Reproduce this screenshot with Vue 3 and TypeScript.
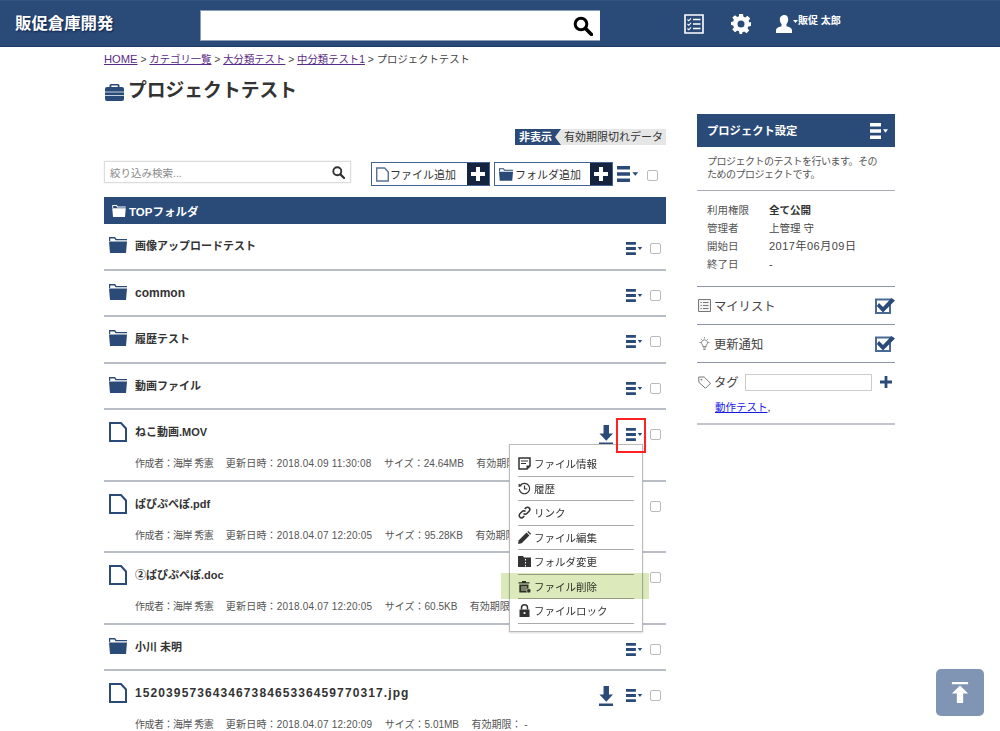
<script setup lang="ts">
interface Row {
  name: string
  kind: 'folder' | 'file'
  nameClass?: string
  meta?: string[]
  open?: boolean
}
const rows: Row[] = [
  { name: '画像アップロードテスト', kind: 'folder' },
  { name: 'common', kind: 'folder', nameClass: 'latin' },
  { name: '履歴テスト', kind: 'folder' },
  { name: '動画ファイル', kind: 'folder' },
  { name: 'ねこ動画.MOV', kind: 'file', open: true, meta: ['作成者：海岸 秀憲', '更新日時：2018.04.09 11:30:08', 'サイズ：24.64MB', '有効期限： -'] },
  { name: 'ぱぴぷぺぽ.pdf', kind: 'file', meta: ['作成者：海岸 秀憲', '更新日時：2018.04.07 12:20:05', 'サイズ：95.28KB', '有効期限： -'] },
  { name: '②ぱぴぷぺぽ.doc', kind: 'file', meta: ['作成者：海岸 秀憲', '更新日時：2018.04.07 12:20:05', 'サイズ：60.5KB', '有効期限： -'] },
  { name: '小川 未明', kind: 'folder' },
  { name: '15203957364346738465336459770317.jpg', kind: 'file', nameClass: 'long', meta: ['作成者：海岸 秀憲', '更新日時：2018.04.07 12:20:09', 'サイズ：5.01MB', '有効期限： -'] },
]
const menu = ['ファイル情報', '履歴', 'リンク', 'ファイル編集', 'フォルダ変更', 'ファイル削除', 'ファイルロック']
const info = [
  { k: '利用権限', v: '全て公開', cls: 'strong' },
  { k: '管理者', v: '上管理 守' },
  { k: '開始日', v: '2017年06月09日', cls: 'wide' },
  { k: '終了日', v: '-' },
]
</script>

<template>
  <div class="page">
    <svg class="defs" aria-hidden="true">
      <symbol id="burger" viewBox="0 0 20 14" preserveAspectRatio="none">
        <path d="M0 0h11v3H0zM0 5.500h11v3H0zM0 11h11v3H0z" />
        <path d="M13 5.500h5l-2.500 3z" />
      </symbol>
      <symbol id="folder" viewBox="0 0 18 16">
        <path d="M0 0h6l1.500 2H18v1.200H6.500L5.500 1.400H1.200V4H0z" />
        <path d="M0 4.400h18L17 16H1z" />
      </symbol>
      <symbol id="file" viewBox="0 0 18 20">
        <path d="M1 1h11l5 5.500V19H1z" fill="#fff" stroke="currentColor" stroke-width="2" />
      </symbol>
      <symbol id="check" viewBox="0 0 20 17">
        <path d="M1 2.500h14v13.500H1z" fill="none" stroke="currentColor" stroke-width="2" />
        <path d="M4 6l4 4 8.500-9L20 3.500 8 15.500 1.800 9z" />
      </symbol>
      <symbol id="download" viewBox="0 0 16 21" preserveAspectRatio="none">
        <path d="M5 0h6v9h4.500L8 16.500.5 9H5z" />
        <path d="M0 18.500h16V21H0z" />
      </symbol>
    </svg>

    <header class="top">
      <div class="logo">販促倉庫開発</div>
      <div class="search">
        <svg class="search-icon" viewBox="0 0 20 20" width="20" height="20">
          <circle cx="8" cy="8" r="5.800" fill="none" stroke="#000" stroke-width="3" />
          <path d="M12.500 12.500L18.500 18.500" stroke="#000" stroke-width="3.600" stroke-linecap="round" />
        </svg>
      </div>
      <svg class="h-list" viewBox="0 0 20 20" width="20" height="20">
        <path d="M1 1h18v18H1z" fill="none" stroke="#fff" stroke-width="1.600" />
        <path d="M9 5.500h7.500M9 10h7.500M9 14.500h7.500" stroke="#fff" stroke-width="1.500" />
        <path d="M3.500 5.500l1.300 1.300L7 4.300M3.500 10l1.300 1.300L7 8.800M3.500 14.500l1.300 1.300L7 13.300" fill="none" stroke="#fff" stroke-width="1.100" />
      </svg>
      <svg class="h-gear" viewBox="0 0 20 20" width="20" height="20">
        <path fill="#fff" fill-rule="evenodd" d="M8 0h4l.5 2.700 1.700.7 2.300-1.600 2.700 2.700-1.600 2.300.7 1.700L20 8v4l-2.700.5-.7 1.700 1.600 2.300-2.700 2.700-2.300-1.600-1.700.7L11 20H8.500L8 17.300l-1.700-.7L4 18.200 1.300 15.500l1.600-2.300-.7-1.700L0 11V8l2.200-.5.700-1.700L1.300 3.500 4 1.300l2.300 1.600L8 2.200zM10 6.500a3.500 3.500 0 100 7 3.500 3.500 0 000-7z" />
      </svg>
      <svg class="h-user" viewBox="0 0 23 18" width="23" height="18">
        <path fill="#fff" d="M8.500 0c2.400 0 3.700 1.800 3.700 4.200 0 2.100-.8 3.800-1.700 4.800v2.200c2 .6 5.500 1.500 5.500 4V18H0v-2.800c0-2.500 3.500-3.400 5.500-4V9C4.600 8 3.800 6.300 3.800 4.200 3.800 1.800 6.100 0 8.500 0z" />
        <path fill="#fff" d="M17 5h5l-2.500 3z" />
      </svg>
      <div class="user">販促 太郎</div>
    </header>

    <div class="content">
      <main class="left">
        <nav class="crumbs">
          <a class="home">HOME</a> &gt; <a>カテゴリ一覧</a> &gt; <a>大分類テスト</a> &gt; <a>中分類テスト1</a> &gt; プロジェクトテスト
        </nav>
        <h1 class="title">
          <svg viewBox="0 0 19 17" width="19" height="17">
            <path fill="#2a4a78" d="M6 0h7a1.500 1.500 0 011.500 1.500V3H17a2 2 0 012 2v10a2 2 0 01-2 2H2a2 2 0 01-2-2V5a2 2 0 012-2h2.500V1.500A1.500 1.500 0 016 0zm.3 1.500V3h6.400V1.500z" />
            <path fill="#c4d0e0" d="M0 7.500h19v1H0zM0 11h19v1H0z" />
          </svg>
          プロジェクトテスト
        </h1>

        <div class="toggle-line">
          <div class="toggle"><span class="t-on">非表示</span><span class="t-off">有効期限切れデータ</span></div>
        </div>

        <div class="tools">
          <div class="filter">
            <span>絞り込み検索...</span>
            <svg viewBox="0 0 14 14" width="13" height="13">
              <circle cx="5.700" cy="5.700" r="4.300" fill="none" stroke="#333" stroke-width="2" />
              <path d="M9 9l4 4" stroke="#333" stroke-width="2.400" stroke-linecap="round" />
            </svg>
          </div>
          <div class="add">
            <svg class="add-ic file-ic" width="13" height="17"><use href="#file" /></svg>
            <span>ファイル追加</span>
            <b class="plus"><i class="cross"></i></b>
          </div>
          <div class="add second">
            <svg class="add-ic folder-ic" width="14" height="13"><use href="#folder" /></svg>
            <span>フォルダ追加</span>
            <b class="plus"><i class="cross"></i></b>
          </div>
          <svg class="burger big"><use href="#burger" /></svg>
          <span class="cb tool-cb"></span>
        </div>

        <div class="top-folder">
          <svg width="14" height="12" class="white-ic"><use href="#folder" /></svg>
          TOPフォルダ
        </div>

        <section
          v-for="r in rows"
          :key="r.name"
          class="row"
          :class="r.kind"
        >
          <div class="row-top">
            <svg v-if="r.kind === 'folder'" class="ic-folder"><use href="#folder" /></svg>
            <svg v-else class="ic-file"><use href="#file" /></svg>
            <div class="name" :class="r.nameClass">{{ r.name }}</div>
            <div class="actions">
              <svg v-if="r.kind === 'file'" class="dl"><use href="#download" /></svg>
              <svg class="burger"><use href="#burger" /></svg>
              <span class="cb"></span>
            </div>
          </div>
          <div v-if="r.meta" class="meta">
            <span v-for="m in r.meta" :key="m">{{ m }}</span>
          </div>

          <template v-if="r.open">
            <div class="red"></div>
            <ul class="menu">
              <li v-for="(m, i) in menu" :key="m">
                <svg class="mi" viewBox="0 0 13 13" width="13" height="13">
                  <g v-if="i === 0">
                    <path d="M1 1h11v8l-3 3H1z" fill="none" stroke="#333" stroke-width="1.500" />
                    <path d="M3 4h7M3 6.500h5" stroke="#333" stroke-width="1.100" />
                    <path d="M8.500 12V8.500H12z" fill="#333" />
                  </g>
                  <g v-else-if="i === 1">
                    <path d="M2.300 3.400A5.200 5.200 0 111.300 7" fill="none" stroke="#333" stroke-width="1.200" />
                    <path d="M.6 1.500l3.500 2.600L.6 5z" fill="#333" />
                    <path d="M6.500 3.500v3.500h2.800" fill="none" stroke="#333" stroke-width="1.200" />
                  </g>
                  <g v-else-if="i === 2" fill="none" stroke="#333" stroke-width="1.500">
                    <path d="M5.500 7.500a2.300 2.300 0 003.300 0l2.300-2.300a2.300 2.300 0 00-3.300-3.300L6.700 3" />
                    <path d="M7.500 5.500a2.300 2.300 0 00-3.300 0L1.900 7.800a2.300 2.300 0 003.300 3.300L6.300 10" />
                  </g>
                  <g v-else-if="i === 3" fill="#333">
                    <path d="M0 13l.8-3.700L8.500 1.600l2.900 2.900-7.700 7.700z" />
                    <path d="M9.300.8l1-.8 2.800 2.800-1 1z" />
                  </g>
                  <g v-else-if="i === 4">
                    <path d="M0 1h5l1 1.500h7V12H0z" fill="#333" />
                    <path d="M7.500 4v1.500M7.500 7v1.500M7.500 10v1.500" stroke="#fff" stroke-width="1" />
                  </g>
                  <g v-else-if="i === 5">
                    <path d="M4 1h4v1.200h3.500v1.300H.500V2.200H4zM1.300 4.500h9.200v8H1.300z" fill="#333" />
                    <path d="M4 6v5M6 6v5M8 6v5" stroke="#fff" stroke-width=".9" />
                    <circle cx="10.800" cy="10.800" r="2.200" fill="#333" stroke="#fff" stroke-width=".7" />
                  </g>
                  <g v-else>
                    <path d="M1.500 5.500h10V13h-10z" fill="#333" />
                    <path d="M3.500 5.500V3.800a3 3 0 016 0v1.700" fill="none" stroke="#333" stroke-width="1.500" />
                    <circle cx="6.500" cy="9" r="1.100" fill="#fff" />
                  </g>
                </svg>
                {{ m }}
              </li>
              <li class="hl"></li>
            </ul>
          </template>
        </section>
      </main>

      <aside class="side">
        <div class="side-head">
          <span>プロジェクト設定</span>
          <svg class="burger side-burger"><use href="#burger" /></svg>
        </div>
        <p class="desc">プロジェクトのテストを行います。そのためのプロジェクトです。</p>
        <dl class="info">
          <div v-for="i in info" :key="i.k" class="info-row">
            <dt>{{ i.k }}</dt>
            <dd :class="i.cls">{{ i.v }}</dd>
          </div>
        </dl>
        <div class="opt">
          <svg class="opt-ic" viewBox="0 0 13 13" width="13" height="13">
            <path d="M.5.500h12v12H.5z" fill="#f4f4f4" stroke="#777" />
            <path d="M5 3.500h5.500M5 6.500h5.500M5 9.500h5.500M2.500 3.500h1.300M2.500 6.500h1.300M2.500 9.500h1.300" stroke="#777" />
          </svg>
          <span class="opt-label">マイリスト</span>
          <svg class="opt-check"><use href="#check" /></svg>
        </div>
        <div class="opt">
          <svg class="opt-ic" viewBox="0 0 13 13" width="13" height="13">
            <path d="M6.500 2.800a3 3 0 00-1.800 5.400v1.300h3.600V8.200a3 3 0 00-1.800-5.400zM5 11h3M5.500 12.500h2" fill="none" stroke="#888" />
            <path d="M6.500 0v1.500M1.500 5.500H3M10 5.500h1.500M2.800 1.800l1 1M10.200 1.800l-1 1" stroke="#999" />
          </svg>
          <span class="opt-label">更新通知</span>
          <svg class="opt-check"><use href="#check" /></svg>
        </div>
        <div class="tag">
          <div class="tag-line">
            <svg class="opt-ic" viewBox="0 0 13 13" width="13" height="13">
              <path d="M.7 1h5.500l6.300 6.300-5 5L.9 6.400z" fill="none" stroke="#777" />
              <circle cx="3.500" cy="3.600" r=".9" fill="#777" />
            </svg>
            <span class="opt-label tag-label">タグ</span>
            <span class="tag-input"></span>
            <svg class="tag-plus" viewBox="0 0 13 13" width="12" height="12"><path d="M5 0h3v5h5v3H8v5H5V8H0V5h5z" fill="#2a4a78" /></svg>
          </div>
          <div class="tag-link"><a>動作テスト</a>,</div>
        </div>
      </aside>
    </div>

    <div class="totop">
      <svg viewBox="0 0 20 24" width="18" height="21" preserveAspectRatio="none">
        <path fill="#fff" d="M1 0h18v2.500H1zM10 4l9 9h-5.500v11h-7V13H1z" />
      </svg>
    </div>
  </div>
</template>

<style>
html, body { margin: 0; height: 731px; overflow: hidden; background: #fff; }
</style>

<style scoped>
.page {
  position: relative;
  height: 731px;
  overflow: hidden;
  color: #333;
  font-family: "Liberation Sans", "Noto Sans CJK JP", sans-serif;
  font-size: 11px;
}
.defs { position: absolute; width: 0; height: 0; }

.top {
  box-sizing: border-box;
  height: 47px;
  background: #2a4a78;
  border-top: 1px solid #34527f;
  border-bottom: 1px solid #1c3a68;
  display: flex;
  align-items: flex-start;
  color: #fff;
}
.logo {
  width: 185px;
  padding-left: 15px;
  font-size: 16.400px;
  line-height: 44px;
  font-weight: 700;
  text-shadow: 1px 1px 2px #0c2347;
  white-space: nowrap;
}
.search {
  margin-top: 9px;
  width: 400px;
  height: 31px;
  box-sizing: border-box;
  background: #fff;
  border: 1px solid #8a9cb8;
  border-width: 1px 0 1px 1px;
  display: flex;
  justify-content: flex-end;
  align-items: center;
  padding-right: 7px;
}
.h-list { margin: 13px 0 0 84px; }
.h-gear { margin: 13px 0 0 27px; }
.h-user { margin: 14px 0 0 25px; }
.user { margin: 13px 0 0 -1px; font-size: 10px; line-height: 14px; font-weight: 700; }

.content { display: flex; margin-left: 104px; width: 791px; gap: 31px; }
.left { width: 562px; flex: none; }

.crumbs { margin-top: 5px; line-height: 14px; font-size: 10.350px; color: #444; white-space: nowrap; }
.crumbs a { color: #5b2a86; text-decoration: underline; }
.crumbs a.home { font-size: 11.200px; }
.title {
  margin: 11px 0 0;
  display: flex;
  align-items: center;
  gap: 4px;
  font-size: 18.800px;
  line-height: 26px;
  font-weight: 700;
  color: #333;
}
.title svg { margin-left: 1px; margin-top: 3px; }

.toggle-line { margin-top: 25px; display: flex; justify-content: flex-end; }
.toggle { display: flex; height: 16px; line-height: 16px; font-size: 11px; }
.t-on { background: #2a4a78; color: #fff; font-weight: 700; padding: 0 8px 0 4px; width: 34px; }
.t-off { position: relative; background: #e6e6e6; padding: 0 3px 0 3px; color: #333; }
.t-off::before {
  content: "";
  position: absolute;
  left: -6px;
  top: 0;
  border-right: 6px solid #e6e6e6;
  border-top: 8px solid transparent;
  border-bottom: 8px solid transparent;
}

.tools { margin-top: 16px; display: flex; align-items: flex-start; height: 36px; }
.filter {
  box-sizing: border-box;
  width: 247px;
  height: 22px;
  border: 1px solid #ddd;
  box-shadow: 0 0 1px #ccc;
  display: flex;
  align-items: center;
  justify-content: space-between;
  padding: 0 5px;
  font-size: 10.500px;
  color: #888;
}
.add {
  box-sizing: border-box;
  margin: 1px 0 0 20px;
  width: 119px;
  height: 24px;
  border: 1px solid #44628f;
  display: flex;
  align-items: center;
  font-size: 11px;
  color: #333;
}
.add.second { margin-left: 4px; }
.add-ic { margin-left: 4px; margin-right: 1px; color: #5a7397; }
.folder-ic { fill: #2a4a78; color: #2a4a78; margin-right: 2px; }
.add span { flex: 1; white-space: nowrap; }
.plus {
  width: 22px;
  height: 22px;
  background: #14243f;
  display: flex;
  align-items: center;
  justify-content: center;
}
.cross {
  display: block;
  width: 14px;
  height: 14px;
  background:
    linear-gradient(#fff, #fff) center / 14px 4px no-repeat,
    linear-gradient(#fff, #fff) center / 4px 14px no-repeat;
}
.burger { width: 18px; height: 13px; fill: #2a4a78; flex: none; }
.burger.big { width: 23.600px; height: 16px; margin: 5px 0 0 4px; }
.cb {
  display: block;
  box-sizing: border-box;
  width: 11px;
  height: 11px;
  border: 1px solid #bbb;
  border-radius: 2px;
  background: #fff;
  flex: none;
}
.tool-cb { margin: 9px 0 0 6.400px; }

.top-folder {
  box-sizing: border-box;
  height: 27px;
  background: #2a4a78;
  color: #fff;
  font-weight: 700;
  font-size: 11.500px;
  display: flex;
  align-items: center;
  gap: 3px;
  padding-left: 8px;
}
.white-ic { fill: #fff; color: #fff; }

.row {
  position: relative;
  box-sizing: border-box;
  padding-top: 12px;
  border-bottom: 2px solid #b9bec6;
}
.row.folder { height: 46.500px; }
.row.file { height: 71.500px; }
.row-top { display: flex; align-items: flex-start; height: 33px; }
.ic-folder { width: 18px; height: 16px; margin: 1px 8px 0 5px; fill: #2a4a78; color: #2a4a78; flex: none; }
.ic-file { width: 18px; height: 20px; margin: 0 8px 0 5px; color: #2a4a78; flex: none; }
.name { flex: 1; margin-top: 1px; font-size: 11px; line-height: 18px; font-weight: 700; color: #333; white-space: nowrap; }
.name.latin { font-size: 12px; }
.name.long { font-size: 12px; letter-spacing: 1.100px; }
.actions { display: flex; align-items: flex-start; margin-top: 3px; height: 20px; }
.actions .burger { margin-top: 3px; margin-left: 13px; }
.actions .cb { margin: 4px 5px 0 6px; }
.dl { width: 14.500px; height: 20px; fill: #2a4a78; margin-top: 0; }
.meta { display: flex; gap: 12.500px; padding-left: 31px; font-size: 10px; line-height: 18px; color: #555; white-space: nowrap; }
.meta span:first-child { letter-spacing: -.5px; }
.meta span:nth-child(2) { letter-spacing: .2px; }

.red {
  position: absolute;
  left: 512px;
  top: 8px;
  width: 30px;
  height: 35px;
  box-sizing: border-box;
  border: 2px solid #f22;
  z-index: 3;
}
.menu {
  position: absolute;
  left: 405px;
  top: 34px;
  width: 134px;
  box-sizing: border-box;
  margin: 0;
  padding: 7px 8px;
  list-style: none;
  background: #fff;
  border: 1px solid #bbb;
  box-shadow: 0 1px 2px rgba(0, 0, 0, .15);
  z-index: 2;
}
.menu li {
  box-sizing: border-box;
  height: 24.500px;
  display: flex;
  align-items: center;
  gap: 3px;
  border-bottom: 1px solid #aaa;
  font-size: 10.500px;
  color: #333;
  white-space: nowrap;
}
.menu li.hl {
  position: absolute;
  left: -9px;
  top: 128px;
  width: 148px;
  height: 26px;
  border: 0;
  background: #dce9bb;
  mix-blend-mode: multiply;
}
.mi { flex: none; }

.side { width: 198px; flex: none; margin-top: 67px; }
.side-head {
  box-sizing: border-box;
  height: 33px;
  background: #2a4a78;
  color: #fff;
  font-weight: 700;
  font-size: 11.300px;
  display: flex;
  align-items: center;
  justify-content: space-between;
  padding: 0 5px 2px 10px;
}
.side-burger { fill: #fff; width: 20px; height: 16px; margin-top: 2px; }
.desc { margin: 0; padding: 8px 10px 9px; font-size: 10px; line-height: 13px; letter-spacing: -.5px; color: #555; border-bottom: 1px solid #aab; height: 26px; }
.info { margin: 0; padding: 10px 10px 13px; border-bottom: 1px solid #8b95a5; }
.info-row { display: flex; line-height: 18px; font-size: 10.500px; }
.info-row dt { width: 62px; color: #555; }
.info-row dd { margin: 0; color: #444; }
.info-row dd.strong { font-weight: 700; color: #333; }
.info-row dd.wide { font-size: 11px; letter-spacing: .5px; }
.opt {
  box-sizing: border-box;
  height: 38px;
  display: flex;
  align-items: center;
  border-bottom: 1px solid #8b95a5;
}
.opt-ic { flex: none; margin-left: 1px; }
.opt-label { flex: 1; margin-left: 3px; font-size: 12.300px; color: #444; }
.opt-check { width: 20px; height: 17px; fill: #2a4a78; color: #4a6a96; }
.tag { box-sizing: border-box; height: 62px; border-bottom: 2px solid #c4c8ce; }
.tag-line { display: flex; align-items: center; height: 20px; padding-top: 9px; }
.tag-label { flex: none; width: 31px; }
.tag-input { box-sizing: border-box; width: 127px; height: 17px; border: 1px solid #ccc; }
.tag-plus { margin-left: 8px; }
.tag-link { margin: 8px 0 0 18px; font-size: 10.500px; line-height: 14px; color: #333; }
.tag-link a { color: #1a1ae6; text-decoration: underline; }

.totop {
  position: absolute;
  left: 936px;
  top: 669px;
  width: 48px;
  height: 47px;
  border-radius: 5px;
  background: #8094b4;
  display: flex;
  align-items: center;
  justify-content: center;
}
</style>
